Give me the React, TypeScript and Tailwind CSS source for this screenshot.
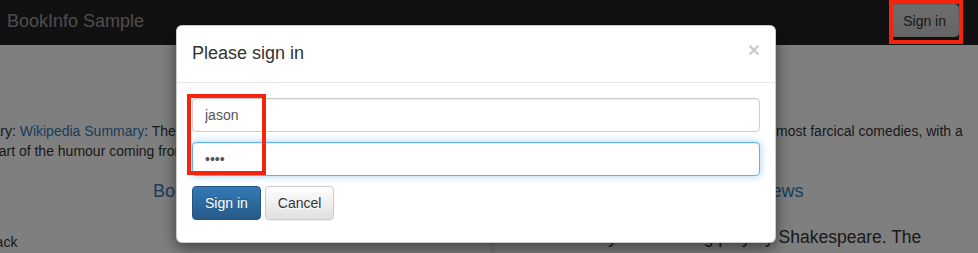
import React from 'react';

const App: React.FC = () => {
  return (
    <div className="relative w-[978px] h-[253px] overflow-hidden bg-white text-[14px] leading-[20px] text-[#333] font-['Liberation_Sans',Arial,sans-serif]">
      {/* Page behind the dialog */}
      <nav className="h-[45px] bg-[#222] flex items-center justify-between pl-[7px] pr-[19px] pb-[4px]">
        <span className="text-[18px] leading-[20px] text-[#9d9d9d]">BookInfo Sample</span>
        <button className="h-[33px] px-[12px] rounded-[4px] border border-[#c4c4c4] bg-linear-to-b from-[#dcdcdc] to-[#cacaca] text-[#333] text-[14px]">
          Sign in
        </button>
      </nav>

      <div className="ml-[-48px] pt-[76px]">
        <div className="mb-[10px]">
          <div className="flex whitespace-nowrap">
            <span className="w-[824px] shrink-0 overflow-hidden">
              Summary: <a className="text-[#337ab7]">Wikipedia Summary</a>: The Comedy of Errors is one of William
              Shakespeare's early plays. It is his shortest and one of his
            </span>
            <span>most farcical comedies, with a</span>
          </div>
          <div className="whitespace-nowrap">
            major part of the humour coming from slapstick and mistaken identity, in addition to puns and word play.
          </div>
        </div>

        <div className="flex ml-[-20px]">
          <div className="w-[543px] shrink-0 px-[15px]">
            <h4 className="text-center text-[18px] leading-[20px] my-[10px] font-medium text-[#337ab7]">Book Details</h4>
            <dl className="pl-[5px] pt-[1px]">
              <dt className="font-bold">Type:</dt>
              <dd>paperback</dd>
            </dl>
          </div>
          <div className="w-[543px] shrink-0 px-[15px]">
            <h4 className="text-center text-[18px] leading-[20px] my-[10px] font-medium text-[#337ab7]">Book Reviews</h4>
            <blockquote className="border-l-[5px] border-[#eee] px-[20px] pt-[13px] pb-[10px] text-[17.5px] leading-[26px]">
              An extremely entertaining play by Shakespeare. The slapstick humour is refreshing!
            </blockquote>
          </div>
        </div>
      </div>

      {/* Backdrop */}
      <div className="absolute inset-0 bg-black/50"></div>

      {/* Dialog */}
      <div className="absolute left-[176px] top-[25px] w-[600px] bg-white rounded-[6px] border border-black/20 shadow-[0_5px_15px_rgba(0,0,0,0.5)]">
        <div className="flex items-start justify-between p-[15px] border-b border-[#e5e5e5]">
          <h4 className="text-[18px] leading-[25.7px] font-medium text-[#333]">Please sign in</h4>
          <button className="text-[21px] leading-none font-bold text-black opacity-20 mt-[-2px]">×</button>
        </div>
        <div className="px-[15px] pt-[15px] pb-[22px]">
          <input
            type="text"
            readOnly
            value="jason"
            className="block w-full h-[34px] px-[12px] py-[6px] mb-[10px] text-[14px] text-[#555] bg-white border border-[#ccc] rounded-[4px] outline-none shadow-[inset_0_1px_1px_rgba(0,0,0,0.075)]"
          />
          <input
            type="password"
            readOnly
            value="1234"
            className="block w-full h-[34px] px-[12px] py-[6px] mb-[10px] text-[14px] text-[#555] bg-white border border-[#66afe9] rounded-[4px] outline-none shadow-[inset_0_1px_1px_rgba(0,0,0,0.075),0_0_8px_rgba(102,175,233,0.6)]"
          />
          <div className="flex gap-[4px]">
            <button className="h-[34px] px-[12px] rounded-[4px] border border-[#245580] bg-linear-to-b from-[#337ab7] to-[#265a88] text-white text-[14px] [text-shadow:0_-1px_0_rgba(0,0,0,0.2)]">
              Sign in
            </button>
            <button className="h-[34px] px-[12px] rounded-[4px] border border-[#ccc] bg-linear-to-b from-white to-[#e0e0e0] text-[#333] text-[14px] shadow-[0_1px_1px_rgba(0,0,0,0.075)] [text-shadow:0_1px_0_#fff]">
              Cancel
            </button>
          </div>
        </div>
      </div>

      {/* Annotation boxes */}
      <div className="absolute left-[187px] top-[94px] w-[79px] h-[81px] border-4 border-[#f4250c]"></div>
      <div className="absolute left-[889px] top-0 w-[74px] h-[44px] border-4 border-[#f4250c]"></div>
    </div>
  );
};

export default App;
